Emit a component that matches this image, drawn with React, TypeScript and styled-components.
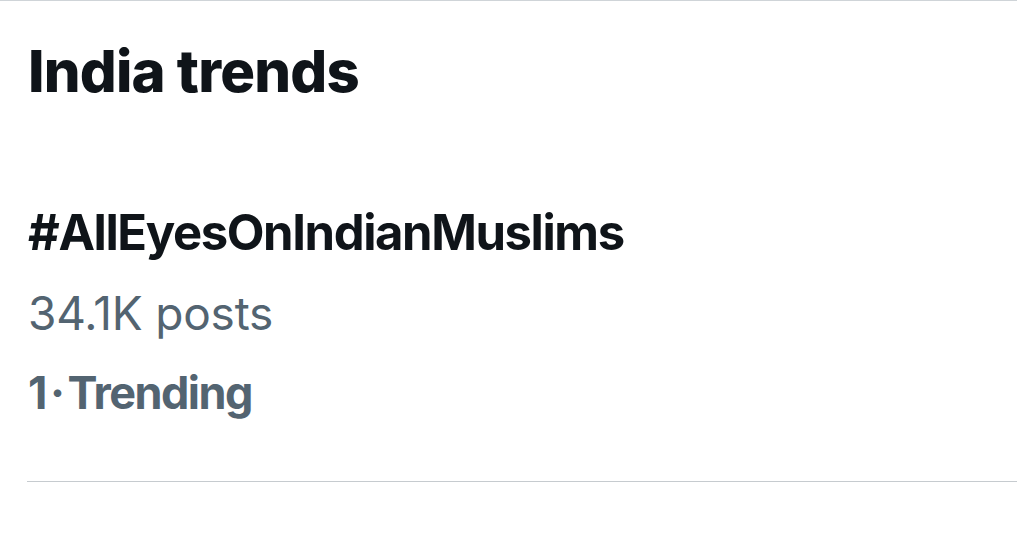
import React from 'react'
import styled, { createGlobalStyle } from 'styled-components'

const GlobalStyle = createGlobalStyle`
  html, body {
    margin: 0;
    padding: 0;
    background: #ffffff;
  }
  body {
    font-family: Inter, 'Liberation Sans', sans-serif;
    -webkit-font-smoothing: antialiased;
  }
`

const trend = {
  tag: '#AllEyesOnIndianMuslims',
  posts: '34.1K posts',
  rank: 1,
  label: 'Trending',
}

export default function App() {
  return (
    <>
      <GlobalStyle />
      <Panel>
        <Title>India trends</Title>
        <TrendItem>
          <Tag>{trend.tag}</Tag>
          <Meta>{trend.posts}</Meta>
          <Meta bold>
            {trend.rank}
            <Dot>·</Dot>
            {trend.label}
          </Meta>
        </TrendItem>
        <Divider />
      </Panel>
    </>
  )
}

const Panel = styled.div`
  width: 1017px;
  height: 546px;
  box-sizing: border-box;
  border-top: 1px solid #cfd4d8;
  display: flex;
  flex-direction: column;
  padding-top: 38px;
  overflow: hidden;
`

const Title = styled.h1`
  margin: 0 0 0 28px;
  font-size: 58px;
  line-height: 64px;
  font-weight: 800;
  letter-spacing: -0.8px;
  color: #0f1419;
`

const TrendItem = styled.div`
  display: flex;
  flex-direction: column;
  padding-left: 28px;
  margin-top: 90px;
`

const Tag = styled.div`
  font-size: 49px;
  line-height: 80px;
  font-weight: 700;
  letter-spacing: -1.4px;
  color: #0f1419;
`

const Meta = styled.div<{ bold?: boolean }>`
  font-size: ${(p) => (p.bold ? '45px' : '46px')};
  line-height: 80px;
  font-weight: ${(p) => (p.bold ? 700 : 400)};
  letter-spacing: ${(p) => (p.bold ? '-1.5px' : '-0.2px')};
  color: #536471;
`

const Dot = styled.span`
  margin: 0 4px;
`

const Divider = styled.hr`
  margin: 48px 0 0 27px;
  border: 0;
  border-top: 1px solid #c6cbcf;
  height: 0;
`
